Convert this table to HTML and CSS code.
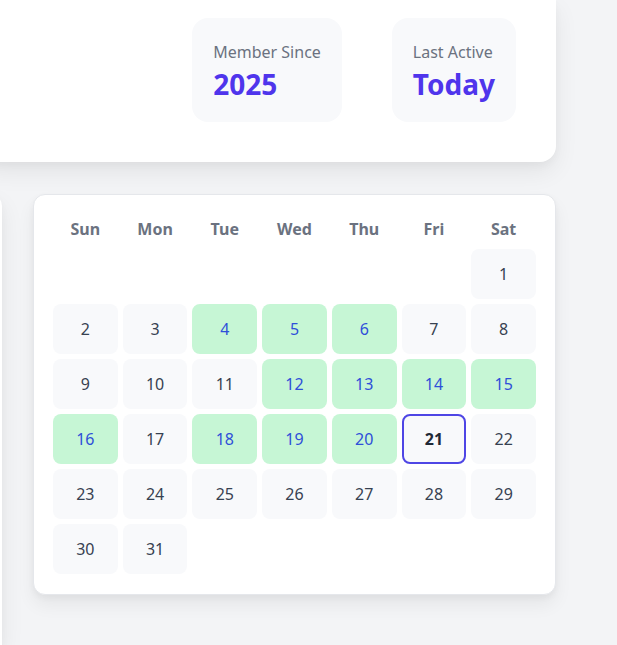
FILE: index.html
```html
<!DOCTYPE html>
<html lang="en">
<head>
<meta charset="utf-8">
<title>Profile</title>
<link rel="stylesheet" href="styles.css">
</head>
<body>
<div class="top-card">
  <div class="stat">
    <div class="stat-label">Member Since</div>
    <div class="stat-value">2025</div>
  </div>
  <div class="stat">
    <div class="stat-label">Last Active</div>
    <div class="stat-value">Today</div>
  </div>
</div>
<div class="lower">
  <div class="side-card"></div>
  <div class="calendar">
    <div class="cal-grid">
      <div class="dow">Sun</div><div class="dow">Mon</div><div class="dow">Tue</div><div class="dow">Wed</div><div class="dow">Thu</div><div class="dow">Fri</div><div class="dow">Sat</div>
      <div class="day empty"></div><div class="day empty"></div><div class="day empty"></div><div class="day empty"></div><div class="day empty"></div><div class="day empty"></div>
      <div class="day">1</div>
      <div class="day">2</div><div class="day">3</div><div class="day active">4</div><div class="day active">5</div><div class="day active">6</div><div class="day">7</div><div class="day">8</div>
      <div class="day">9</div><div class="day">10</div><div class="day">11</div><div class="day active">12</div><div class="day active">13</div><div class="day active">14</div><div class="day active">15</div>
      <div class="day active">16</div><div class="day">17</div><div class="day active">18</div><div class="day active">19</div><div class="day active">20</div><div class="day today">21</div><div class="day">22</div>
      <div class="day">23</div><div class="day">24</div><div class="day">25</div><div class="day">26</div><div class="day">27</div><div class="day">28</div><div class="day">29</div>
      <div class="day">30</div><div class="day">31</div>
    </div>
  </div>
</div>
</body>
</html>
```

FILE: styles.css
```css
* { box-sizing: border-box; }
html, body { margin: 0; padding: 0; }
body {
  background: #f3f4f6;
  font-family: "Noto Sans", "Open Sans", sans-serif;
  color: #374151;
  overflow: hidden;
}
.top-card {
  background: #ffffff;
  margin: 0 61px 0 -20px;
  padding: 18px 40px 40px;
  border-radius: 0 0 16px 16px;
  box-shadow: 0 10px 25px rgba(0, 0, 0, 0.07), 0 4px 8px rgba(0, 0, 0, 0.03);
  display: flex;
  justify-content: flex-end;
  gap: 50px;
}
.stat {
  background: #f8f9fb;
  border-radius: 16px;
  padding: 20px 21px;
  height: 104px;
}
.stat-label {
  font-size: 16px;
  line-height: 24px;
  color: #6b7280;
  margin-top: 2px;
}
.stat-value {
  font-size: 28px;
  line-height: 40px;
  font-weight: 700;
  color: #4f35ec;
}
.lower {
  display: flex;
  gap: 31px;
  margin: 32px 61px 0 -98px;
  align-items: flex-start;
}
.side-card {
  flex: 0 0 100px;
  height: 451px;
  background: #ffffff;
  border-radius: 12px 12px 0 0;
  box-shadow: 0 10px 25px rgba(0, 0, 0, 0.07), 0 4px 8px rgba(0, 0, 0, 0.03);
}
.calendar {
  flex: 1;
  background: #ffffff;
  border: 1px solid #e5e7eb;
  border-radius: 12px;
  padding: 19px 19px 20px;
  box-shadow: 0 10px 18px rgba(0, 0, 0, 0.06), 0 3px 6px rgba(0, 0, 0, 0.04);
}
.cal-grid {
  display: grid;
  grid-template-columns: repeat(7, 1fr);
  grid-template-rows: 30px;
  grid-auto-rows: 50px;
  gap: 5px;
}
.dow {
  display: flex;
  align-items: center;
  justify-content: center;
  font-weight: 700;
  font-size: 16px;
  color: #6b7280;
}
.day {
  display: flex;
  align-items: center;
  justify-content: center;
  background: #f8f9fb;
  border-radius: 8px;
  font-size: 16px;
  color: #374151;
}
.day.empty { background: transparent; }
.day.active {
  background: #c6f6d5;
  color: #2f4fd9;
}
.day.today {
  border: 2px solid #4f46e5;
  font-weight: 700;
  color: #1f2937;
}
```
